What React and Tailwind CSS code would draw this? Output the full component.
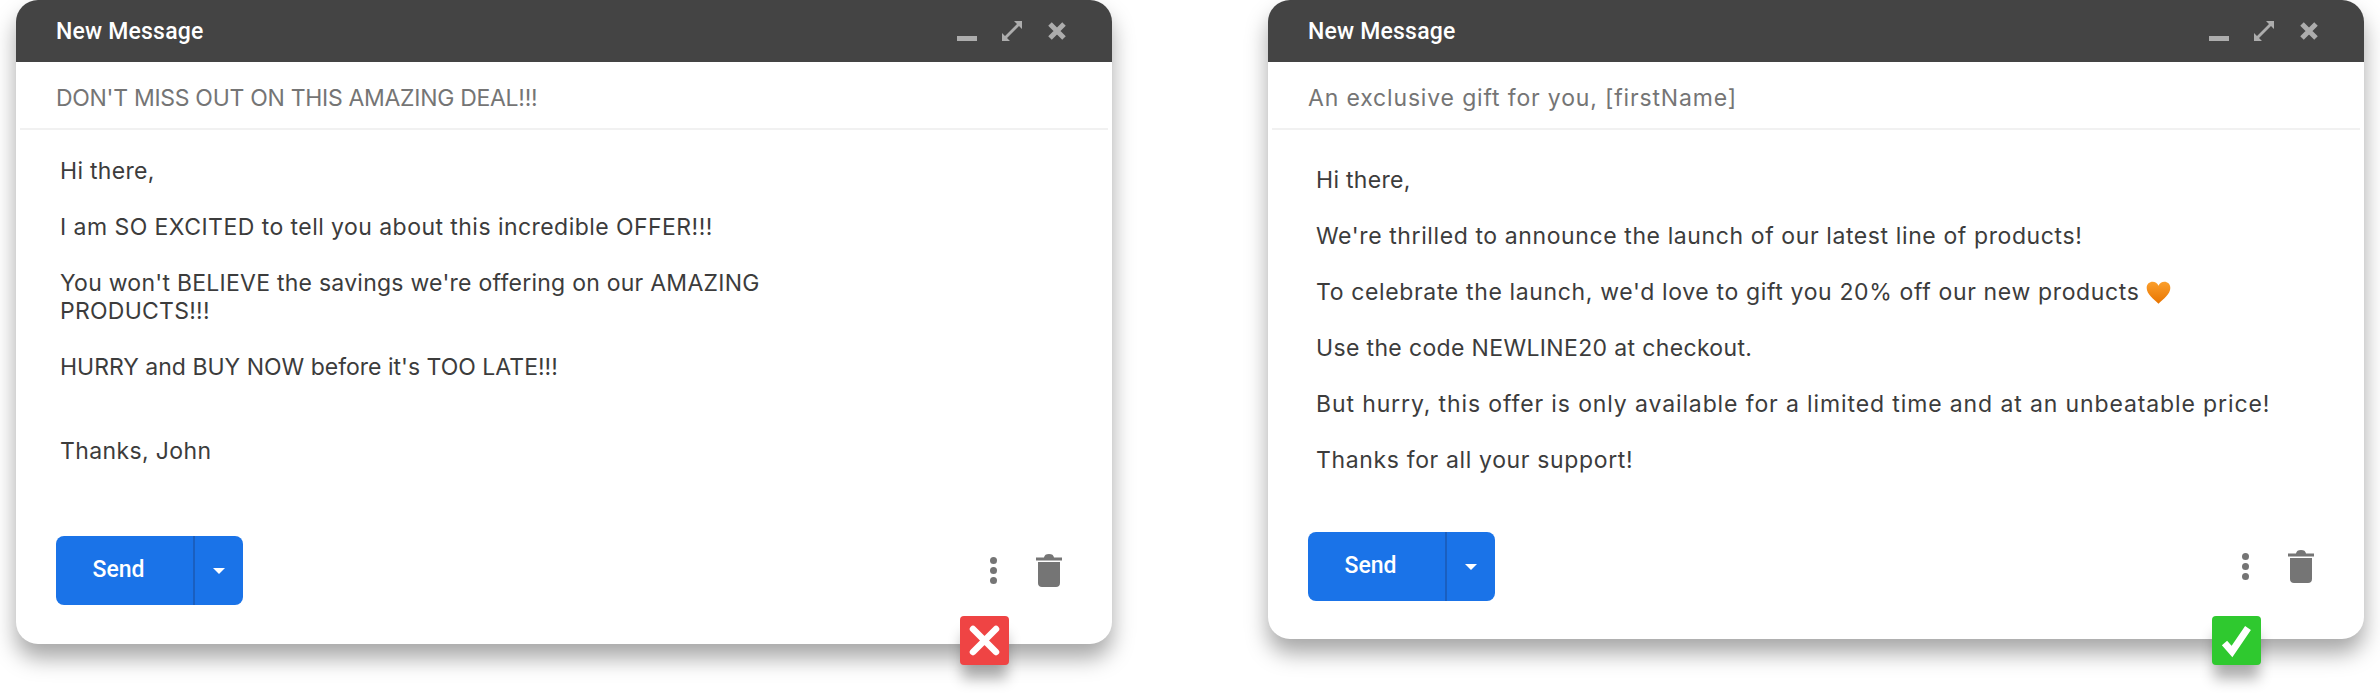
const badMessage = {
  subject: "DON'T MISS OUT ON THIS AMAZING DEAL!!!",
  subjectClass: "tracking-[-0.3px]",
  paragraphs: [
    { text: "Hi there,", className: "tracking-[0.3px]" },
    { text: "I am SO EXCITED to tell you about this incredible OFFER!!!", className: "tracking-[0.45px]" },
    { text: "You won't BELIEVE the savings we're offering on our AMAZING PRODUCTS!!!", className: "tracking-[0.25px]" },
    { text: "HURRY and BUY NOW before it's TOO LATE!!!", className: "" },
  ],
};

const goodMessage = {
  subject: "An exclusive gift for you, [firstName]",
  subjectClass: "tracking-[0.84px]",
  paragraphs: [
    { text: "Hi there,", className: "tracking-[0.3px]" },
    { text: "We're thrilled to announce the launch of our latest line of products!", className: "tracking-[0.6px]" },
    { text: "To celebrate the launch, we'd love to gift you 20% off our new products", className: "tracking-[0.64px]", heart: true },
    { text: "Use the code NEWLINE20 at checkout.", className: "tracking-[0.35px]" },
    { text: "But hurry, this offer is only available for a limited time and at an unbeatable price!", className: "tracking-[0.88px]" },
    { text: "Thanks for all your support!", className: "tracking-[0.64px]" },
  ],
};

const Heart = () => (
  <svg viewBox="0 0 24 24" className="inline-block w-[27px] h-[27px] ml-[5px] align-[-6px]">
    <defs>
      <linearGradient id="heartFill" x1="0" y1="0" x2="0" y2="1">
        <stop offset="0" stopColor="#fb9f2c" />
        <stop offset="1" stopColor="#e87400" />
      </linearGradient>
    </defs>
    <path
      d="M12 22 C8 18 1.500 13.500 1.500 8 C1.500 4.500 4 2.500 6.800 2.500 C9 2.500 11 3.700 12 6 C13 3.700 15 2.500 17.200 2.500 C20 2.500 22.500 4.500 22.500 8 C22.500 13.500 16 18 12 22 Z"
      fill="url(#heartFill)"
    />
  </svg>
);

const WindowControls = () => (
  <div className="flex items-center gap-[25px] mr-[5px] text-[#adadad]">
    <svg viewBox="0 0 20 20" className="w-[20px] h-[20px]">
      <rect x="0" y="15" width="20" height="5" fill="currentColor" />
    </svg>
    <svg viewBox="0 0 20 20" className="w-[20px] h-[20px]">
      <path d="M12 0 H20 V8 L17 5 L5 17 L8 20 H0 V12 L3 15 L15 3 Z" fill="currentColor" />
    </svg>
    <svg viewBox="0 0 20 20" className="w-[20px] h-[20px]">
      <path d="M3 3 L17 17 M17 3 L3 17" stroke="currentColor" strokeWidth="5" />
    </svg>
  </div>
);

const Trash = () => (
  <svg viewBox="0 0 26 33" className="w-[26px] h-[33px]">
    <path d="M0 3.500 H8 C8.500 1 10 0 13 0 C16 0 17.500 1 18 3.500 H26 V6.500 H0 Z" fill="#757575" />
    <path d="M2 8 H24 V29 C24 31.500 22.500 33 20 33 H6 C3.500 33 2 31.500 2 29 Z" fill="#757575" />
  </svg>
);

const MessageCard = ({ message, heightClass, bodyClass, footerClass, children }) => (
  <div className={`relative w-[1096px] shrink-0 flex flex-col bg-white rounded-[22px] shadow-[0_14px_22px_rgba(0,0,0,0.35)] ${heightClass}`}>
    <div className="h-[62px] flex items-center justify-between px-[40px] bg-[#444444] rounded-t-[22px]">
      <span className="pt-[2px] font-['Roboto',sans-serif] font-medium text-[23px] tracking-[0.2px] text-white">New Message</span>
      <WindowControls />
    </div>

    <div className="h-[68px] flex items-center mx-[4px] pl-[36px] pt-[7px] border-b-2 border-[#f1f1f1]">
      <span className={`text-[23px] text-[#757575] ${message.subjectClass}`}>{message.subject}</span>
    </div>

    <div className={bodyClass}>{children}</div>

    <div className={`mt-auto flex items-center justify-between pl-[40px] pr-[50px] ${footerClass}`}>
      <div className="w-[187px] h-[69px] flex rounded-[8px] bg-[#1a73e8] text-white">
        <div className="w-[139px] pr-[12px] flex items-center justify-center border-r-2 border-[#1a5fc0] font-['Roboto',sans-serif] font-medium text-[23px]">
          Send
        </div>
        <div className="flex-1 flex items-center justify-center">
          <span className="w-0 h-0 border-x-[6px] border-t-[6px] border-x-transparent border-t-white" />
        </div>
      </div>
      <div className="flex items-center gap-[39px]">
        <div className="flex flex-col gap-[3px]">
          <span className="w-[7px] h-[7px] rounded-full bg-[#757575]" />
          <span className="w-[7px] h-[7px] rounded-full bg-[#757575]" />
          <span className="w-[7px] h-[7px] rounded-full bg-[#757575]" />
        </div>
        <Trash />
      </div>
    </div>
  </div>
);

const Badge = ({ color, children }) => (
  <div className={`absolute top-[616px] left-[944px] w-[49px] h-[49px] flex items-center justify-center rounded-[4px] shadow-[0_16px_14px_-2px_rgba(0,0,0,0.3)] ${color}`}>
    {children}
  </div>
);

const Line = ({ children, className = "" }) => (
  <p className={`text-[23px] leading-[28px] text-[#3c3c3c] ${className}`}>{children}</p>
);

export default function App() {
  return (
    <div className="w-[2380px] h-[698px] flex items-start pl-[16px] gap-[156px] bg-white font-['Inter',sans-serif] overflow-hidden">
      <MessageCard
        message={badMessage}
        heightClass="h-[644px]"
        bodyClass="pt-[27px] pl-[44px] w-[760px] flex flex-col gap-[28px]"
        footerClass="pb-[39px]"
      >
        {badMessage.paragraphs.map(({ text, className }) => (
          <Line key={text} className={className}>{text}</Line>
        ))}
        <Line className="mt-[28px] tracking-[0.38px]">Thanks, John</Line>
        <Badge color="bg-[#ef4444]">
          <svg viewBox="0 0 49 49" className="w-[49px] h-[49px]">
            <path d="M13 13 L36 36 M36 13 L13 36" stroke="white" strokeWidth="6.500" strokeLinecap="round" />
          </svg>
        </Badge>
      </MessageCard>

      <MessageCard
        message={goodMessage}
        heightClass="h-[639px]"
        bodyClass="pt-[36px] pl-[48px] flex flex-col gap-[28px]"
        footerClass="pb-[38px]"
      >
        {goodMessage.paragraphs.map(({ text, className, heart }) => (
          <Line key={text} className={className}>
            {text}
            {heart && <Heart />}
          </Line>
        ))}
        <Badge color="bg-[#2fc92f]">
          <svg viewBox="0 0 49 49" className="w-[49px] h-[49px]">
            <path d="M12.500 27 L20 35.500 L36 12" fill="none" stroke="white" strokeWidth="7" />
          </svg>
        </Badge>
      </MessageCard>
    </div>
  );
}
